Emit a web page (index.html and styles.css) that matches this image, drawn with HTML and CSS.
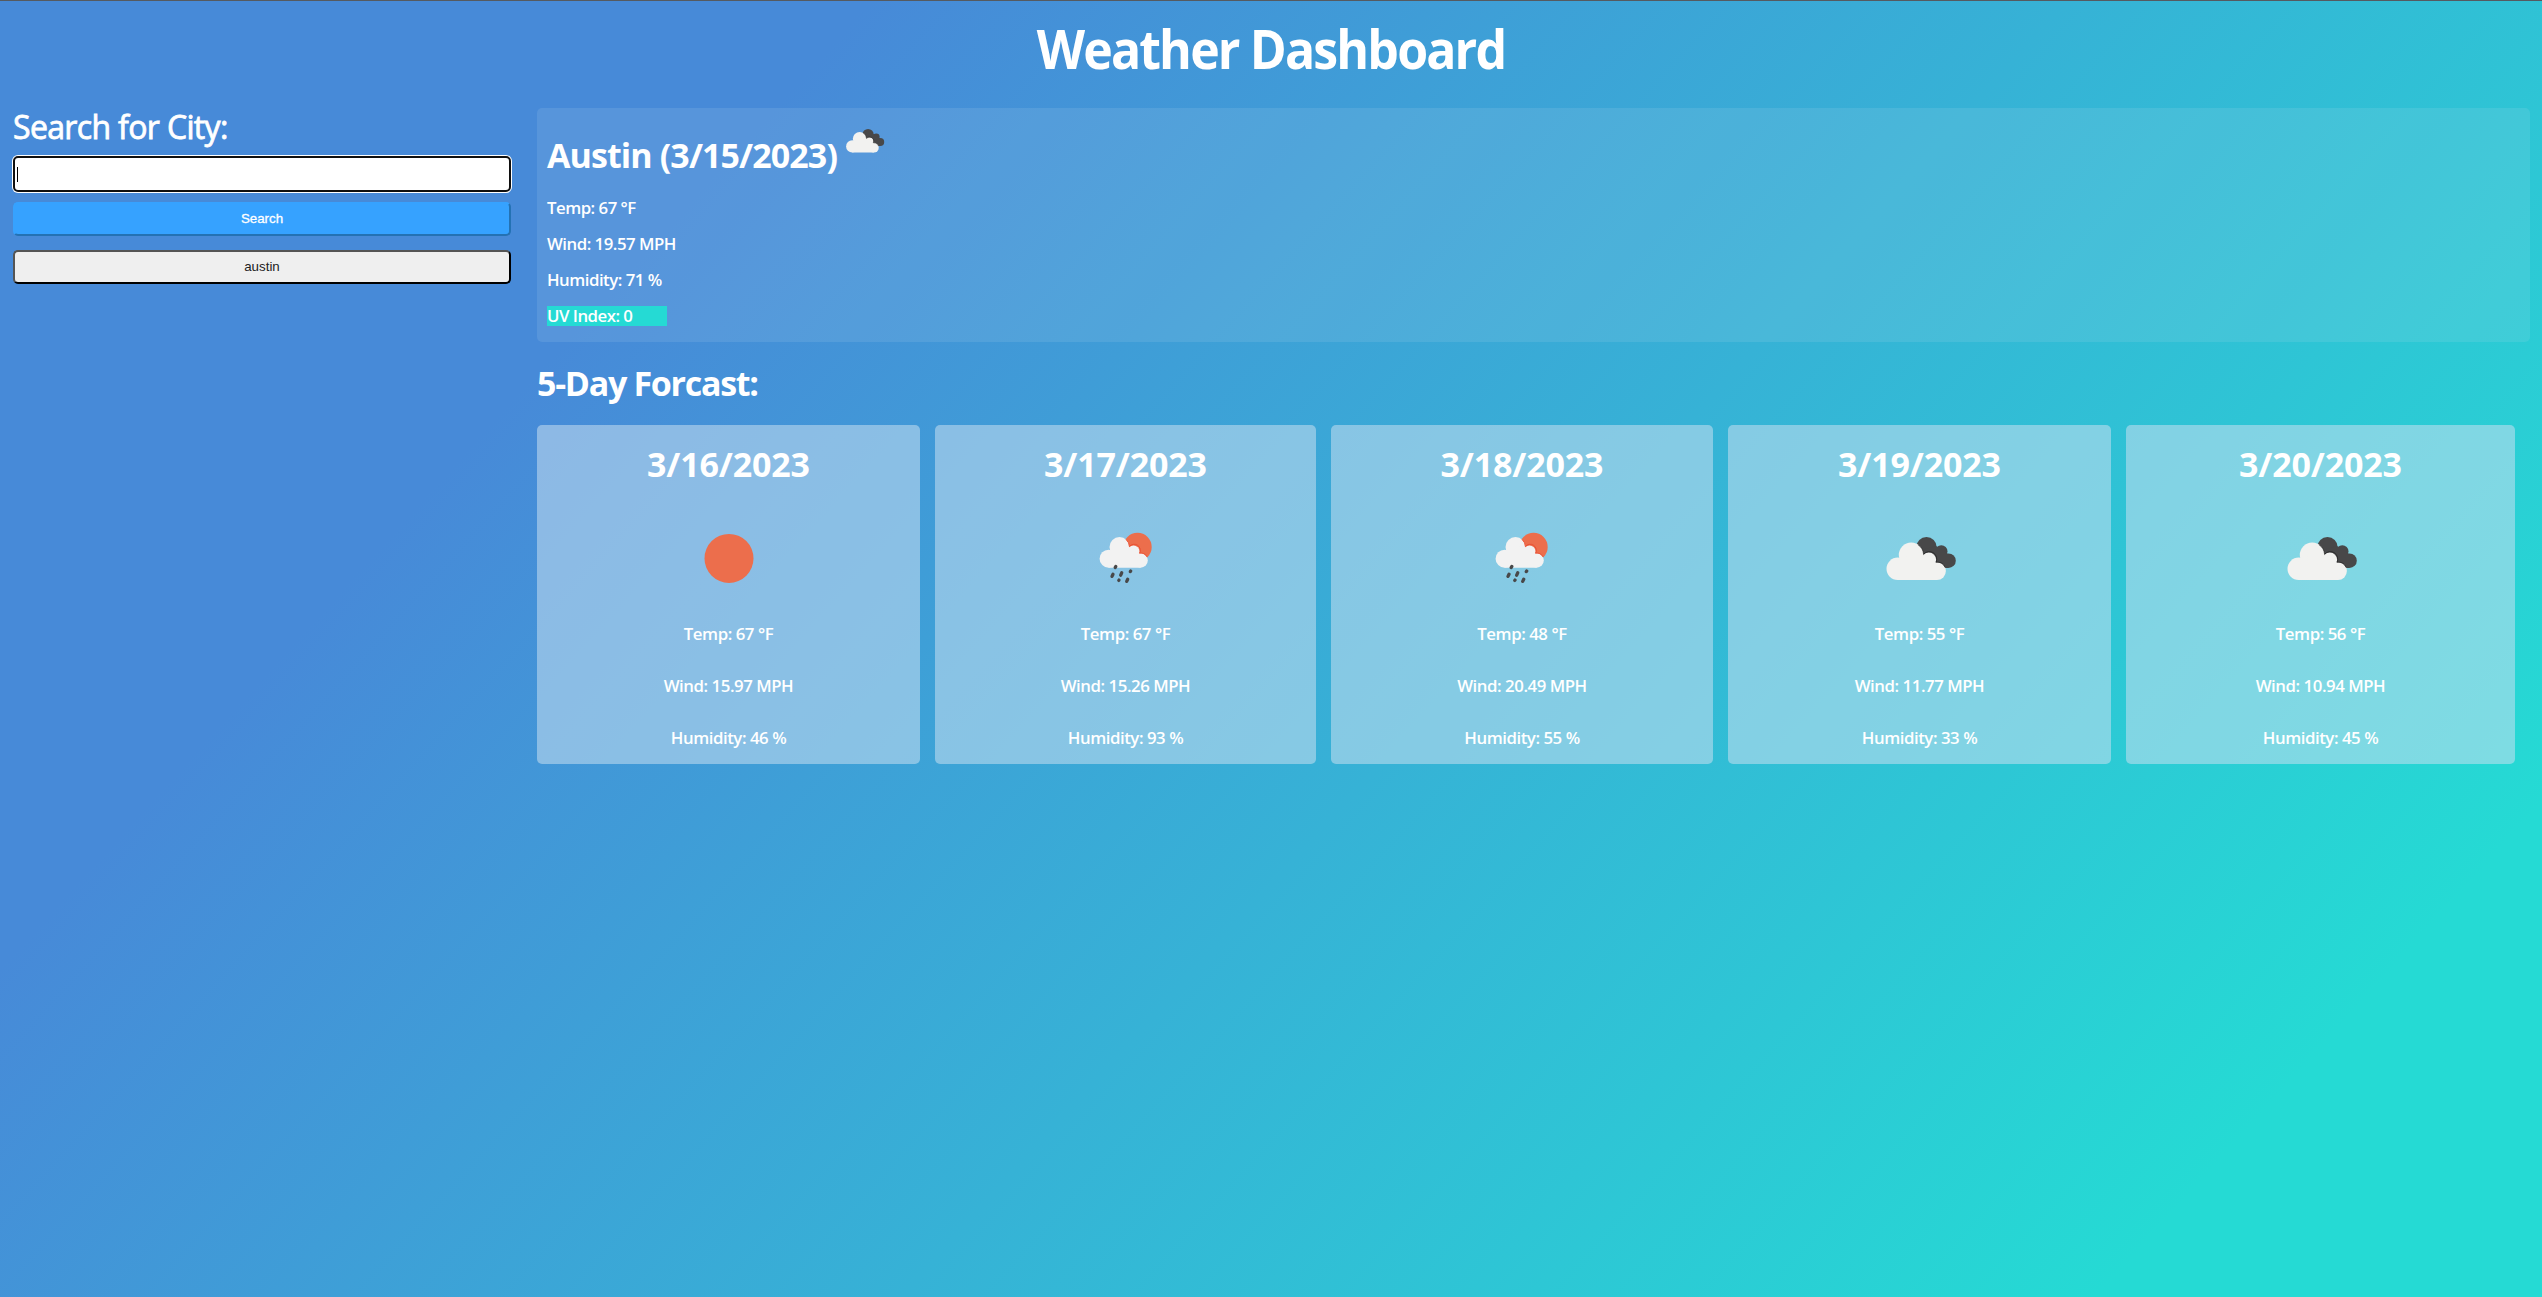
FILE: index.html
```html
<!DOCTYPE html>
<html lang="en">
<head>
<meta charset="utf-8">
<title>Weather Dashboard</title>
<link rel="stylesheet" href="styles.css">
</head>
<body>
<svg width="0" height="0" class="defs" aria-hidden="true">
  <symbol id="clouds" viewBox="0 0 100 100">
    <g fill="#484849"><circle cx="56.5" cy="39.2" r="10.2"/><circle cx="71.3" cy="43.4" r="6.2"/><circle cx="78.5" cy="52.7" r="7.3"/><path d="M52 42L66 38L78 46V60H70L54 48z"/></g>
    <g fill="#f2f2f0"><circle cx="27.7" cy="60.8" r="11.2"/><circle cx="41.2" cy="47" r="12.4"/><circle cx="58.8" cy="52" r="7.4"/><circle cx="67" cy="63.1" r="8.9"/><path d="M27.7 72V52L41 46L58 50L67 58V72z"/></g>
    <path d="M48 36.7A12.4 12.4 0 0 1 53.6 46.3A7.4 7.4 0 0 1 66 54.2A8.9 8.9 0 0 1 75.2 59.6" fill="none" stroke="#222" stroke-width=".7"/>
  </symbol>
  <symbol id="rain" viewBox="0 0 100 100">
    <circle cx="61.5" cy="39" r="14.2" fill="#ec6e4c"/>
    <g fill="#f2f2f2"><circle cx="32.6" cy="50.7" r="9"/><circle cx="43.5" cy="39" r="10"/><circle cx="57.5" cy="43.6" r="6.1"/><circle cx="64.6" cy="52.5" r="7.2"/><path d="M32.6 59.7V44L43 38L57 41L64.6 50V59.7z"/></g>
    <path d="M50 31.5A10 10 0 0 1 53.4 38.6A6.1 6.1 0 0 1 63.6 45.2A7.2 7.2 0 0 1 71 48.8" fill="none" stroke="#e8472c" stroke-width=".8"/>
    <path d="M39.2 59.6L39.8 58.4M36 68.4L37 66.2M44.7 67.2L45.7 64.8M54.3 63.6L54.7 63M42.8 72.4L43 72.1M50.7 73.4L51.7 71.2" stroke="#484849" stroke-width="3.3" stroke-linecap="round"/>
  </symbol>
  <symbol id="sun" viewBox="0 0 100 100"><circle cx="50" cy="50.4" r="24.5" fill="#ec6e4c"/></symbol>
</svg>
<header class="title"><h1>Weather Dashboard</h1></header>
<div class="layout">
  <aside class="search">
    <label for="city">Search for City:</label>
    <div class="field"><input id="city" type="text"><span class="caret"></span></div>
    <button class="go">Search</button>
    <button class="past">austin</button>
  </aside>
  <main class="content">
    <section class="current">
      <h2>Austin (3/15/2023)<svg class="small"><use href="#clouds"/></svg></h2>
      <p>Temp: 67 °F</p>
      <p>Wind: 19.57 MPH</p>
      <p>Humidity: 71 %</p>
      <p class="uv">UV Index: 0</p>
    </section>
    <h2 class="heading">5-Day Forcast:</h2>
    <section class="days">
      <article><h2>3/16/2023</h2><svg><use href="#sun"/></svg><p>Temp: 67 °F</p><p>Wind: 15.97 MPH</p><p>Humidity: 46 %</p></article>
      <article><h2>3/17/2023</h2><svg><use href="#rain"/></svg><p>Temp: 67 °F</p><p>Wind: 15.26 MPH</p><p>Humidity: 93 %</p></article>
      <article><h2>3/18/2023</h2><svg><use href="#rain"/></svg><p>Temp: 48 °F</p><p>Wind: 20.49 MPH</p><p>Humidity: 55 %</p></article>
      <article><h2>3/19/2023</h2><svg><use href="#clouds"/></svg><p>Temp: 55 °F</p><p>Wind: 11.77 MPH</p><p>Humidity: 33 %</p></article>
      <article><h2>3/20/2023</h2><svg><use href="#clouds"/></svg><p>Temp: 56 °F</p><p>Wind: 10.94 MPH</p><p>Humidity: 45 %</p></article>
    </section>
  </main>
</div>
</body>
</html>
```
FILE: styles.css
```css
* { box-sizing: border-box; }
body {
  margin: 0;
  height: 1297px;
  border-top: 1px solid #555a60;
  background: linear-gradient(132deg, #478ad8 23.5%, #25dad4 88%);
  color: #fff;
  font-family: "Open Sans", "Noto Sans", sans-serif;
  font-size: 16.8px;
  line-height: 20px;
  font-weight: 600;
}
.defs { position: absolute; }
h1, h2, p { margin: 0; white-space: nowrap; }
.title { height: 107px; padding-top: 12px; text-align: center; }
h1 { font-size: 54px; line-height: 70px; font-weight: 700; letter-spacing: -2px; transform: scaleX(.926); }
h2 { font-size: 34px; line-height: 42px; font-weight: 700; }
.layout { display: flex; padding: 0 12px 0 13px; gap: 26px; }
.search { width: 498px; display: flex; flex-direction: column; }
.search label { font-size: 32px; line-height: 38px; font-weight: 400; letter-spacing: -.65px; -webkit-text-stroke: .8px #fff; margin-bottom: 10px; }
.field { height: 36px; display: flex; align-items: center; padding-left: 4px; background: #fff; border: 2px solid #101010; border-radius: 5px; box-shadow: 0 0 0 1px #fff; position: relative; margin-bottom: 10px; }
.field input { position: absolute; inset: 0; width: 100%; border: 0; background: none; outline: 0; }
.caret { width: 1px; height: 15px; background: #000; margin-left: -2px; }
button { height: 34px; font: 13.33px "Liberation Sans", Arial, sans-serif; border-radius: 5px; padding: 0 0 2px; }
.go { color: #fff; -webkit-text-stroke: .3px #fff; background: #36a2ff; border: 2px solid; border-color: #36a2ff #2472b4 #2472b4 #36a2ff; margin-bottom: 14px; }
.past { color: #222; background: #efefef; border: 2px solid; border-color: #555 #000 #000 #555; }
.content { flex: 1; }
.current { height: 234px; padding: 26px 10px 0; border-radius: 5px; background: rgba(201,223,240,.13); display: flex; flex-direction: column; gap: 16px; }
.current h2 { height: 46px; display: flex; letter-spacing: -.9px; margin-bottom: 2px; }
.small { width: 55px; height: 55px; margin: -21px 0 0 0; }
.current p { letter-spacing: -.5px; }
.uv { width: 120px; background: #25dad4; }
.heading { margin: 20px 0 21px; letter-spacing: -1.3px; }
.days { display: grid; grid-template-columns: 383px 381px 382px 383px 389px; gap: 15px; }
.days article { height: 339px; padding-top: 18px; border-radius: 5px; background: rgba(201,223,240,.54); display: flex; flex-direction: column; align-items: center; }
.days h2 { letter-spacing: -.15px; }
.days svg { width: 100px; height: 100px; margin: 23px 0 16px; flex: none; }
.days p { margin-bottom: 32px; letter-spacing: -.45px; }
```
